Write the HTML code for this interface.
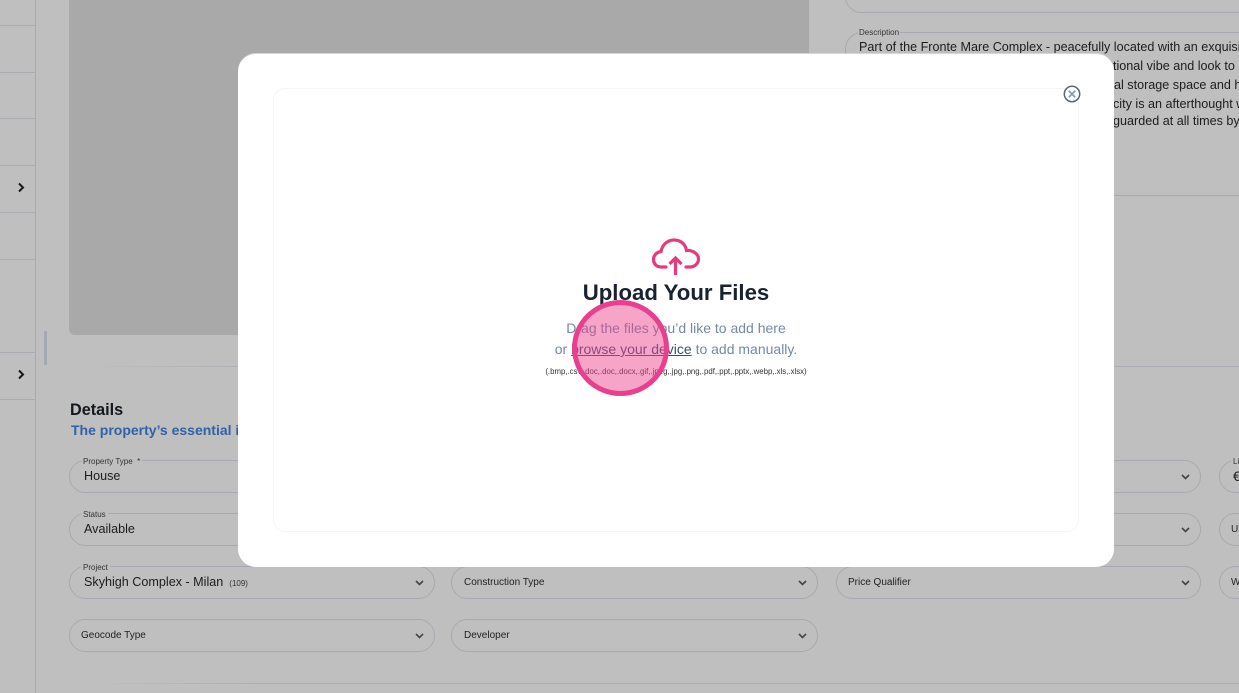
<!DOCTYPE html>
<html><head><meta charset="utf-8">
<style>
html,body{margin:0;padding:0;width:1239px;height:693px;overflow:hidden;background:#bfbfbf;font-family:"Liberation Sans",sans-serif;color:#1a1a1a}
.a{position:absolute;white-space:nowrap}
.l{position:absolute;left:0;width:35px;height:1px;background:#a9acb1}
.f{position:absolute;box-sizing:border-box;height:33px;border:1px solid #a6a9b0;border-radius:17px}
.lb{position:absolute;font-size:8px;color:#333;background:#bfbfbf;padding:0 2px;line-height:9px;top:-4px;left:11px;white-space:nowrap}
.v{position:absolute;left:14px;top:7px;font-size:12.6px;line-height:16px;white-space:nowrap;color:#1c1c1c}
.p{position:absolute;left:11px;top:9px;font-size:10px;line-height:13px;color:#222;white-space:nowrap}
.c{position:absolute;right:9px;top:12px;width:11px;height:8px}
.d{position:absolute;left:859px;font-size:12.6px;line-height:14px;color:#1c1c1c;white-space:nowrap}
</style></head><body>
<div class="a" style="left:35px;top:0;width:1px;height:693px;background:#a6aab2"></div>
<div class="l" style="top:25px"></div><div class="l" style="top:72px"></div><div class="l" style="top:118px"></div><div class="l" style="top:165px"></div><div class="l" style="top:212px"></div><div class="l" style="top:259px"></div><div class="l" style="top:352px"></div><div class="l" style="top:399px"></div>
<svg class="a" style="left:17px;top:182px" width="8" height="11" viewBox="0 0 8 11"><path d="M2 1.5 6 5.5 2 9.5" fill="none" stroke="#15181d" stroke-width="2"/></svg>
<svg class="a" style="left:17px;top:369px" width="8" height="11" viewBox="0 0 8 11"><path d="M2 1.5 6 5.5 2 9.5" fill="none" stroke="#15181d" stroke-width="2"/></svg>
<div class="a" style="left:69px;top:-10px;width:740px;height:345px;background:#a9a9a9;border-radius:6px"></div>
<div class="a" style="left:44px;top:331px;width:3px;height:34px;background:#a3aab6"></div>
<div class="a" style="left:90px;top:366px;width:1149px;height:1px;background:linear-gradient(90deg,#bfbfbf,#aaadb3 15%)"></div>
<div class="a" style="left:90px;top:683px;width:1149px;height:1px;background:linear-gradient(90deg,#bfbfbf,#aaadb3 15%)"></div>

<div class="a" style="left:70px;top:401px;font-size:16.2px;line-height:18px;font-weight:bold;color:#15181d">Details</div>
<div class="a" style="left:71px;top:422px;font-size:14px;line-height:16px;font-weight:bold;color:#2f62a8">The property’s essential information</div>

<div class="f" style="left:69px;top:460px;width:366px"><div class="lb">Property Type &nbsp;*</div><div class="v">House</div></div>
<div class="f" style="left:69px;top:513px;width:366px"><div class="lb">Status</div><div class="v">Available</div></div>
<div class="f" style="left:69px;top:566px;width:366px"><div class="lb">Project</div><div class="v">Skyhigh Complex - Milan<span style="font-size:8px;color:#333;margin-left:6px">(109)</span></div><svg class="c" viewBox="0 0 11 8"><path d="M2 2 5.5 5.5 9 2" fill="none" stroke="#444" stroke-width="1.6"/></svg></div>
<div class="f" style="left:69px;top:619px;width:366px"><div class="p">Geocode Type</div><svg class="c" viewBox="0 0 11 8"><path d="M2 2 5.5 5.5 9 2" fill="none" stroke="#444" stroke-width="1.6"/></svg></div>
<div class="f" style="left:451px;top:566px;width:367px"><div class="p" style="left:12px">Construction Type</div><svg class="c" viewBox="0 0 11 8"><path d="M2 2 5.5 5.5 9 2" fill="none" stroke="#444" stroke-width="1.6"/></svg></div>
<div class="f" style="left:451px;top:619px;width:367px"><div class="p" style="left:12px">Developer</div><svg class="c" viewBox="0 0 11 8"><path d="M2 2 5.5 5.5 9 2" fill="none" stroke="#444" stroke-width="1.6"/></svg></div>
<div class="f" style="left:836px;top:460px;width:365px"><svg class="c" viewBox="0 0 11 8"><path d="M2 2 5.5 5.5 9 2" fill="none" stroke="#444" stroke-width="1.6"/></svg></div>
<div class="f" style="left:836px;top:513px;width:365px"><svg class="c" viewBox="0 0 11 8"><path d="M2 2 5.5 5.5 9 2" fill="none" stroke="#444" stroke-width="1.6"/></svg></div>
<div class="f" style="left:836px;top:566px;width:365px"><div class="p">Price Qualifier</div><svg class="c" viewBox="0 0 11 8"><path d="M2 2 5.5 5.5 9 2" fill="none" stroke="#444" stroke-width="1.6"/></svg></div>
<div class="f" style="left:1219px;top:460px;width:200px"><div class="lb">List Price</div><div class="v" style="left:13px;font-size:14px">€</div></div>
<div class="f" style="left:1219px;top:513px;width:200px"><div class="p">Unit</div></div>
<div class="f" style="left:1219px;top:566px;width:200px"><div class="p">Website</div></div>

<div class="f" style="left:845px;top:-20px;width:500px"></div>
<div class="a" style="left:845px;top:32px;width:500px;height:164px;box-sizing:border-box;border:1px solid #a6a9b0;border-radius:17px"></div>
<div class="a" style="left:858px;top:28px;font-size:8px;line-height:9px;background:#bfbfbf;padding:0 1px;color:#333">Description</div>
<div class="d" style="top:40px">Part of the Fronte Mare Complex - peacefully located with an exquisite</div>
<div class="d" style="top:59px;left:1113px">tional vibe and look to keep</div>
<div class="d" style="top:78px;left:1114px">al storage space and has</div>
<div class="d" style="top:97px;left:1113px">city is an afterthought with</div>
<div class="d" style="top:114px;left:1113px">guarded at all times by</div>

<div class="a" style="left:238px;top:53px;width:876px;height:514px;box-sizing:border-box;background:#fff;border-radius:18px;border:1px solid #d6d6d6;border-width:1px 0 0 0"></div>
<div class="a" style="left:273px;top:88px;width:806px;height:444px;box-sizing:border-box;border:1px solid #f6f6f6;border-radius:12px"></div>
<svg class="a" style="left:1063px;top:85px" width="18" height="18" viewBox="0 0 18 18"><circle cx="9" cy="9" r="7.7" fill="#fff" stroke="#566778" stroke-width="1.5"/><path d="M5.800 5.800 12.200 12.200M12.200 5.800 5.800 12.200" stroke="#8896a5" stroke-width="1.7"/></svg>
<svg class="a" style="left:651px;top:238px" width="50" height="38" viewBox="0 0 50 38"><path d="M15 29H10C5 29 2.500 25 2.500 21.500C2.500 17 6 14 10 13.500C11.500 6 17 2 23 2C30 2 34.500 6.500 35.500 12.500C42 12 47.500 16 47.500 21C47.500 26 43 29 39 29H35" fill="none" stroke="#e8397f" stroke-width="3.200" stroke-linecap="round"/><path d="M24.500 37V21M18.500 26 24.500 20 30.500 26" fill="none" stroke="#e8397f" stroke-width="3.200"/></svg>
<div class="a" style="left:476px;top:280px;width:400px;text-align:center;font-size:22.2px;line-height:26px;font-weight:bold;color:#192231">Upload Your Files</div>
<div class="a" style="left:476px;top:320px;width:400px;text-align:center;font-size:14px;line-height:16px;color:#7489a8">Drag the files you’d like to add here</div>
<div class="a" style="left:476px;top:341px;width:400px;text-align:center;font-size:14px;line-height:16px;color:#7489a8">or <span style="color:#3a4f6e;text-decoration:underline">browse your device</span> to add manually.</div>
<div class="a" style="left:476px;top:367px;width:400px;text-align:center;font-size:7.84px;line-height:10px;color:#333">(.bmp,.csv,.doc,.doc,.docx,.gif,.jpeg,.jpg,.png,.pdf,.ppt,.pptx,.webp,.xls,.xlsx)</div>
<div class="a" style="left:572px;top:300px;width:97px;height:96px;box-sizing:border-box;border-radius:50%;border:5px solid #e8408f;background:rgba(236,64,140,.47)"></div>
</body></html>
